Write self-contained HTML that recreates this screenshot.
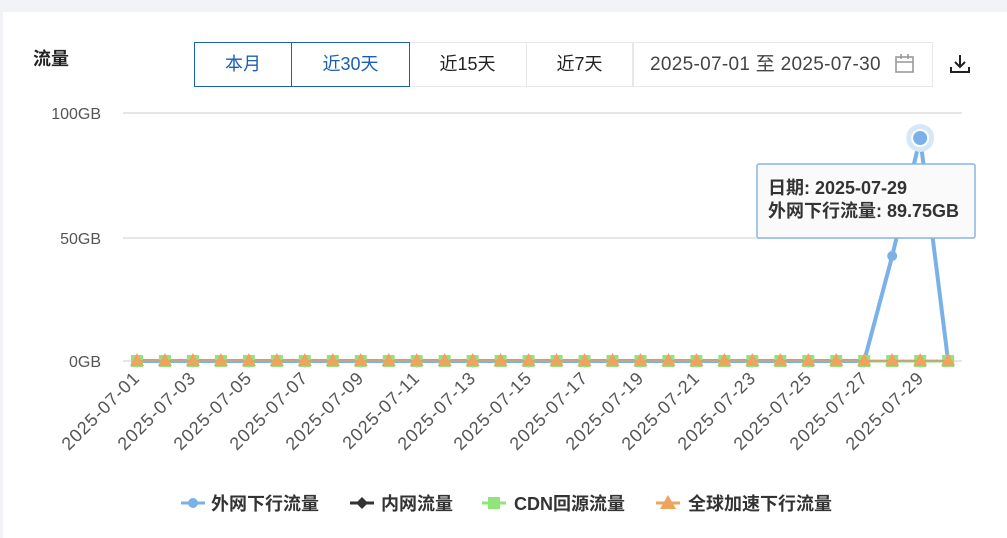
<!DOCTYPE html>
<html><head><meta charset="utf-8"><style>
body{margin:0;width:1007px;height:538px;background:#f2f3f7;font-family:"Liberation Sans","Noto Sans CJK SC",sans-serif;overflow:hidden}
.card{position:absolute;left:3px;top:12px;width:1004px;height:526px;background:#fff}
.title{position:absolute;left:33px;top:45px;font-size:18px;font-weight:bold;color:#222}
.btn{position:absolute;top:42px;height:43px;line-height:43px;text-align:center;font-size:18px;color:#222;border:1px solid #e6e8ec;box-sizing:content-box;background:#fff}
.act{border-color:#1a5fb4;color:#1a5fb4;z-index:2}
</style></head><body>
<div class="card"></div>
<div class="title">流量</div>
<div class="btn act" style="left:194px;width:96px">本月</div>
<div class="btn act" style="left:291px;width:117px">近30天</div>
<div class="btn" style="left:409px;width:117px;border-left:none">近15天</div>
<div class="btn" style="left:527px;width:105px;border-left:none">近7天</div>
<div class="btn" style="left:633px;border-left:1px solid #e6e8ec;text-align:left;padding-left:16px;width:282px;color:#444;font-size:19px;letter-spacing:0.3px">2025-07-01 至 2025-07-30</div>
<svg style="position:absolute;left:894px;top:53px" width="22" height="22" viewBox="0 0 22 22"><rect x="2" y="4" width="17" height="15" fill="none" stroke="#999" stroke-width="1.6"/><line x1="2" y1="9" x2="19" y2="9" stroke="#999" stroke-width="1.6"/><line x1="7" y1="1" x2="7" y2="6" stroke="#999" stroke-width="1.6"/><line x1="14" y1="1" x2="14" y2="6" stroke="#999" stroke-width="1.6"/></svg>
<svg style="position:absolute;left:949px;top:53px" width="22" height="22" viewBox="0 0 22 22"><path d="M11 2V14M6 9L11 14L16 9M2 14V19H20V14" fill="none" stroke="#222" stroke-width="2"/></svg>
<svg id="c" style="position:absolute;left:0;top:0" width="1007" height="538" font-family="Liberation Sans,Noto Sans CJK SC,sans-serif">
<g stroke="#ddd" stroke-width="1.5"><line x1="123" y1="113" x2="962" y2="113"/><line x1="123" y1="238" x2="962" y2="238"/><line x1="123" y1="361" x2="962" y2="361"/></g>
<g font-size="16" fill="#555" text-anchor="end"><text x="101" y="119">100GB</text><text x="101" y="244">50GB</text><text x="101" y="367">0GB</text></g>
<g id="ticks" stroke="#ddd" stroke-width="1.5"></g>
<g font-size="18" fill="#555" text-anchor="end" letter-spacing="1">
<text transform="translate(141,379) rotate(-45)">2025-07-01</text>
<text transform="translate(197,379) rotate(-45)">2025-07-03</text>
<text transform="translate(253,379) rotate(-45)">2025-07-05</text>
<text transform="translate(309,379) rotate(-45)">2025-07-07</text>
<text transform="translate(365,379) rotate(-45)">2025-07-09</text>
<text transform="translate(421,379) rotate(-45)">2025-07-11</text>
<text transform="translate(477,379) rotate(-45)">2025-07-13</text>
<text transform="translate(533,379) rotate(-45)">2025-07-15</text>
<text transform="translate(589,379) rotate(-45)">2025-07-17</text>
<text transform="translate(645,379) rotate(-45)">2025-07-19</text>
<text transform="translate(701,379) rotate(-45)">2025-07-21</text>
<text transform="translate(757,379) rotate(-45)">2025-07-23</text>
<text transform="translate(813,379) rotate(-45)">2025-07-25</text>
<text transform="translate(869,379) rotate(-45)">2025-07-27</text>
<text transform="translate(925,379) rotate(-45)">2025-07-29</text>
</g>
<g id="m"></g>
<rect x="757" y="164" width="218" height="74" rx="2" fill="#fafafa" stroke="#8ab6e0" stroke-width="1.5"/>
<g font-size="18" font-weight="bold" fill="#333"><text x="768" y="194">日期: 2025-07-29</text><text x="768" y="217">外网下行流量: 89.75GB</text></g>
<g font-size="18" font-weight="bold" fill="#333">
<line x1="181" y1="503" x2="205" y2="503" stroke="#7ab1e8" stroke-width="3"/><circle cx="193" cy="503" r="5" fill="#7ab1e8"/><text x="211" y="510">外网下行流量</text>
<line x1="350" y1="503" x2="374" y2="503" stroke="#333" stroke-width="3"/><path d="M362 497L368 503L362 509L356 503Z" fill="#333"/><text x="381" y="510">内网流量</text>
<line x1="482" y1="503" x2="506" y2="503" stroke="#8fe57a" stroke-width="3"/><rect x="488" y="497" width="12" height="12" fill="#8fe57a"/><text x="514" y="510">CDN回源流量</text>
<line x1="656" y1="503" x2="680" y2="503" stroke="#f0a35e" stroke-width="3"/><path d="M668 495L676 509H660Z" fill="#f0a35e"/><text x="688" y="510">全球加速下行流量</text>
</g>
</svg>
<script>
var ns="http://www.w3.org/2000/svg",m=document.getElementById('m'),tk=document.getElementById('ticks');
function el(t,a,p){var e=document.createElementNS(ns,t);for(var k in a)e.setAttribute(k,a[k]);(p||m).appendChild(e);return e}
var X=function(i){return 137+i*27.97};
for(var i=0;i<30;i+=2)el('line',{x1:X(i),y1:361,x2:X(i),y2:368},tk);
var ys=[];for(i=0;i<30;i++)ys.push(361);ys[27]=256;ys[28]=138;
var d='';for(i=0;i<30;i++)d+=(i?'L':'M')+X(i)+' '+ys[i];
el('path',{d:'M137 361H948',stroke:'#8fe57a','stroke-width':3,fill:'none'});
el('path',{d:d,stroke:'#7ab1e8','stroke-width':4,fill:'none'});
for(i=0;i<30;i++){el('rect',{x:X(i)-6,y:355,width:12,height:12,fill:'#8fe57a'});}
el('path',{d:'M137 361H948',stroke:'#c9a57a','stroke-width':2,fill:'none'});
for(i=0;i<30;i++){var x=X(i);el('path',{d:'M'+x+' 353L'+(x+7)+' 366H'+(x-7)+'Z',fill:'#f0a35e'});}
el('circle',{cx:X(27),cy:256,r:5,fill:'#7ab1e8'});
el('circle',{cx:X(28),cy:138,r:14,fill:'#d6e7f8'});
el('circle',{cx:X(28),cy:138,r:8,fill:'#7ab1e8',stroke:'#fff','stroke-width':2});
</script>
</body></html>
